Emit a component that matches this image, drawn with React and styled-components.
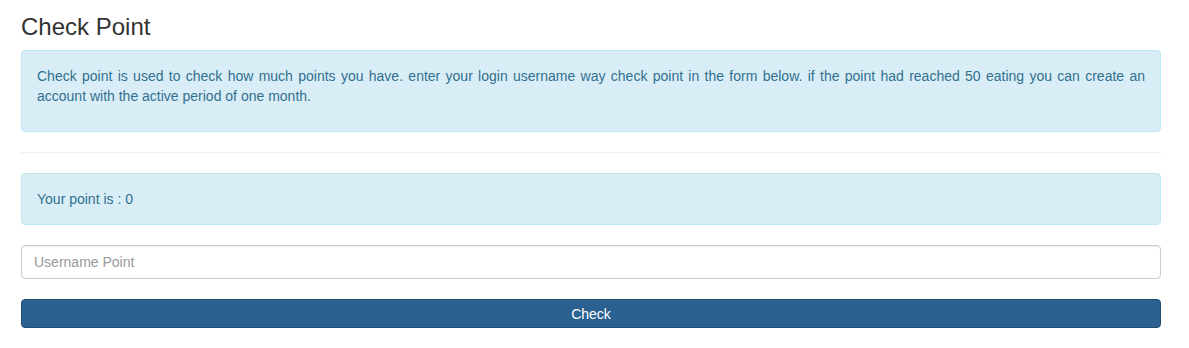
import React from 'react';
import styled, { createGlobalStyle } from 'styled-components';

const GlobalStyle = createGlobalStyle`
  body {
    margin: 0;
    background: #fff;
    font-family: "Liberation Sans", Arial, sans-serif;
    font-size: 14px;
    line-height: 20px;
    color: #333;
  }
`;

export default function App() {
  return (
    <>
      <GlobalStyle />
      <Page>
        <Title>Check Point</Title>
        <Alert>
          <AlertText $justify>
            Check point is used to check how much points you have. enter your login username way check point in the
            form below. if the point had reached 50 eating you can create an account with the active period of one month.
          </AlertText>
        </Alert>
        <Divider />
        <Alert>Your point is : 0</Alert>
        <Form onSubmit={(e) => e.preventDefault()}>
          <Input type="text" placeholder="Username Point" />
          <SubmitButton type="submit">Check</SubmitButton>
        </Form>
      </Page>
    </>
  );
}

const Page = styled.div`
  width: 1140px;
  padding: 0 28px 0 21px;
  display: flex;
  flex-direction: column;
`;

const Title = styled.h3`
  margin: 14px 0 10px;
  font-size: 24px;
  line-height: 26px;
  font-weight: 500;
  color: #333;
`;

const Alert = styled.div`
  padding: 15px;
  background: #d9edf7;
  border: 1px solid #bce8f1;
  border-radius: 4px;
  color: #31708f;
`;

const AlertText = styled.p`
  margin: 0 0 10px;
  text-align: ${(p) => (p.$justify ? 'justify' : 'left')};
`;

const Divider = styled.hr`
  width: 100%;
  margin: 20px 0;
  border: 0;
  border-top: 1px solid #eee;
`;

const Form = styled.form`
  display: flex;
  flex-direction: column;
  gap: 20px;
  margin-top: 20px;
`;

const Input = styled.input`
  box-sizing: border-box;
  height: 34px;
  padding: 6px 12px;
  font-family: inherit;
  font-size: 14px;
  color: #555;
  border: 1px solid #ccc;
  border-radius: 4px;
  box-shadow: inset 0 1px 1px rgba(0, 0, 0, 0.075);
  outline: none;

  &::placeholder {
    color: #999;
  }
`;

const SubmitButton = styled.button`
  box-sizing: border-box;
  height: 29px;
  padding: 0 12px;
  font-family: inherit;
  font-size: 14px;
  color: #fff;
  background: #2a6190;
  border: 1px solid #204d74;
  border-radius: 4px;
  cursor: pointer;
`;
